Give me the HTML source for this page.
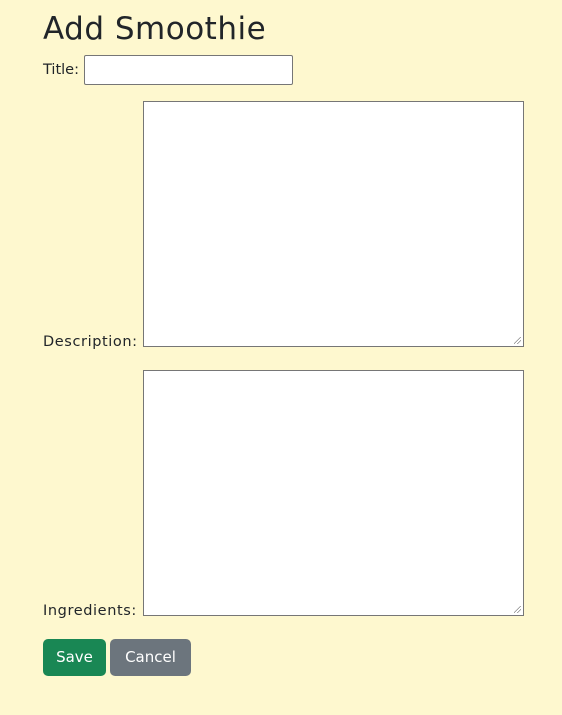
<!DOCTYPE html>
<html><head><meta charset="utf-8"><style>
html,body{margin:0;padding:0;}
body{width:562px;height:715px;background:#fef8cf;font-family:"DejaVu Sans","Liberation Sans",sans-serif;color:#212529;position:relative;overflow:hidden;}
.a{position:absolute;}
h1{position:absolute;left:43px;top:11px;margin:0;font-weight:400;font-size:31px;letter-spacing:0.5px;font-family:"DejaVu Sans",sans-serif;}
.lbl{font-size:14.5px;letter-spacing:0.6px;}
.box{position:absolute;background:#fff;border:1px solid #767676;box-sizing:border-box;}
.btn{position:absolute;color:#fff;font-size:15px;border-radius:5px;text-align:center;line-height:37px;height:37px;}
.grip{position:absolute;right:2px;bottom:2px;width:7px;height:7px;background:linear-gradient(135deg,transparent 45%,#888 45%,#888 52%,transparent 52%,transparent 70%,#888 70%,#888 77%,transparent 77%);}
</style></head><body>
<h1>Add Smoothie</h1>
<div class="a lbl" style="left:43px;top:62px;letter-spacing:0;">Title:</div>
<div class="box" style="left:84px;top:55px;width:209px;height:30px;border-radius:2px;"></div>
<div class="a lbl" style="left:43px;top:334px;">Description:</div>
<div class="box" style="left:143px;top:101px;width:381px;height:246px;"><div class="grip"></div></div>
<div class="a lbl" style="left:43px;top:603px;">Ingredients:</div>
<div class="box" style="left:143px;top:370px;width:381px;height:246px;"><div class="grip"></div></div>
<div class="btn" style="left:43px;top:639px;width:63px;background:#198754;">Save</div>
<div class="btn" style="left:110px;top:639px;width:81px;background:#6c757d;">Cancel</div>
</body></html>
